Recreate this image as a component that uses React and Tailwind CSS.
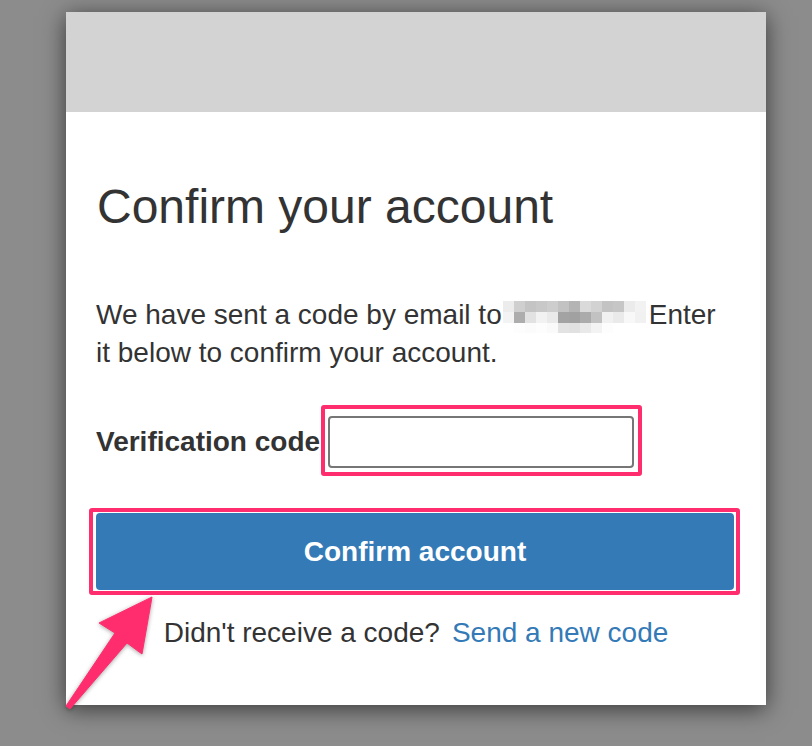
// App.jsx
const EMAIL_PIXELS = [
  ["#ececec", "#cfcfcf", "#c4c4c4", "#c8c8c8", "#cdcdcd", "#c2c2c2", "#b4b4b4", "#dadada", "#d2d2d2", "#c3c3c3", "#c6c6c6", "#ebebeb", "#f2f2f2"],
  ["#f3f3f3", "#adadad", "#e2e2e2", "#f2f2f2", "#eaeaea", "#a3a3a3", "#a1a1a1", "#ababab", "#c2c2c2", "#f1f1f1", "#eaeaea", "#f8f8f8", "#f1f1f1"],
  ["#ffffff", "#fdfdfd", "#fbfbfb", "#fdfdfd", "#fafafa", "#e3e3e3", "#e1e1e1", "#e9e9e9", "#f3f3f3", "#fdfdfd", "#ffffff", "#ffffff", "#ffffff"],
];

function PixelatedEmail() {
  return (
    <span className="inline-block align-top mt-[5px] ml-[1px] mr-[3px] h-[32px] leading-none">
      <span className="grid grid-cols-[repeat(13,11px)] grid-rows-[11px_11px_10px]">
        {EMAIL_PIXELS.flat().map((c, i) => (
          <span key={i} style={{ background: c }} />
        ))}
      </span>
    </span>
  );
}

function Arrow() {
  return (
    <svg
      className="absolute left-0 top-0 pointer-events-none drop-shadow-[0_1px_2px_rgba(0,0,0,0.35)]"
      width="812"
      height="746"
      viewBox="0 0 812 746"
    >
      <polygon
        points="152,597 142,654 127,643 70,709 66,706 115,633 99,623"
        fill="#ff2d6e"
        strokeLinejoin="round"
        stroke="#ff2d6e"
        strokeWidth="1"
      />
    </svg>
  );
}

export default function App() {
  return (
    <div className="relative w-[812px] h-[746px] overflow-hidden bg-[#8c8c8c] font-['Liberation_Sans',Arial,sans-serif] text-[#333333]">
      <div className="ml-[66px] mt-[12px] w-[700px] h-[693px] bg-white shadow-[0_4px_22px_rgba(0,0,0,0.6)]">
        <div className="h-[100px] bg-[#d3d3d3]" />

        <div className="px-[30px]">
          <h1 className="mt-[68px] text-[48px] leading-[53px] font-normal pl-[1px]">
            Confirm your account
          </h1>

          <p className="mt-[63px] text-[28px] leading-[38px]">
            We have sent a code by email to<PixelatedEmail />Enter
            <br />
            it below to confirm your account.
          </p>

          <div className="mt-[44px] flex items-center">
            <label className="text-[28px] leading-[32px] font-bold">Verification code</label>
            <span className="relative ml-[8px]">
              <input
                type="text"
                className="block w-[306px] h-[52px] border-2 border-[#767676] rounded-[4px] bg-white px-3 text-[24px] outline-none"
              />
              <span className="absolute -left-[7px] -top-[11px] -right-[8px] -bottom-[8px] border-[4px] border-[#ff2d6e] rounded-[3px] pointer-events-none" />
            </span>
          </div>

          <div className="relative mt-[45px] w-[638px]">
            <button className="w-full h-[77px] rounded-[4px] bg-[#337ab7] text-white text-[28px] font-bold">
              Confirm account
            </button>
            <span className="absolute -left-[7px] -top-[5px] -right-[6px] -bottom-[5px] border-[4px] border-[#ff2d6e] rounded-[3px] pointer-events-none" />
          </div>

          <div className="mt-[27px] flex justify-center gap-[12px] text-[28px] leading-[32px]">
            <span>Didn't receive a code?</span>
            <a href="#" className="text-[#337ab7]">Send a new code</a>
          </div>
        </div>
      </div>
      <Arrow />
    </div>
  );
}
